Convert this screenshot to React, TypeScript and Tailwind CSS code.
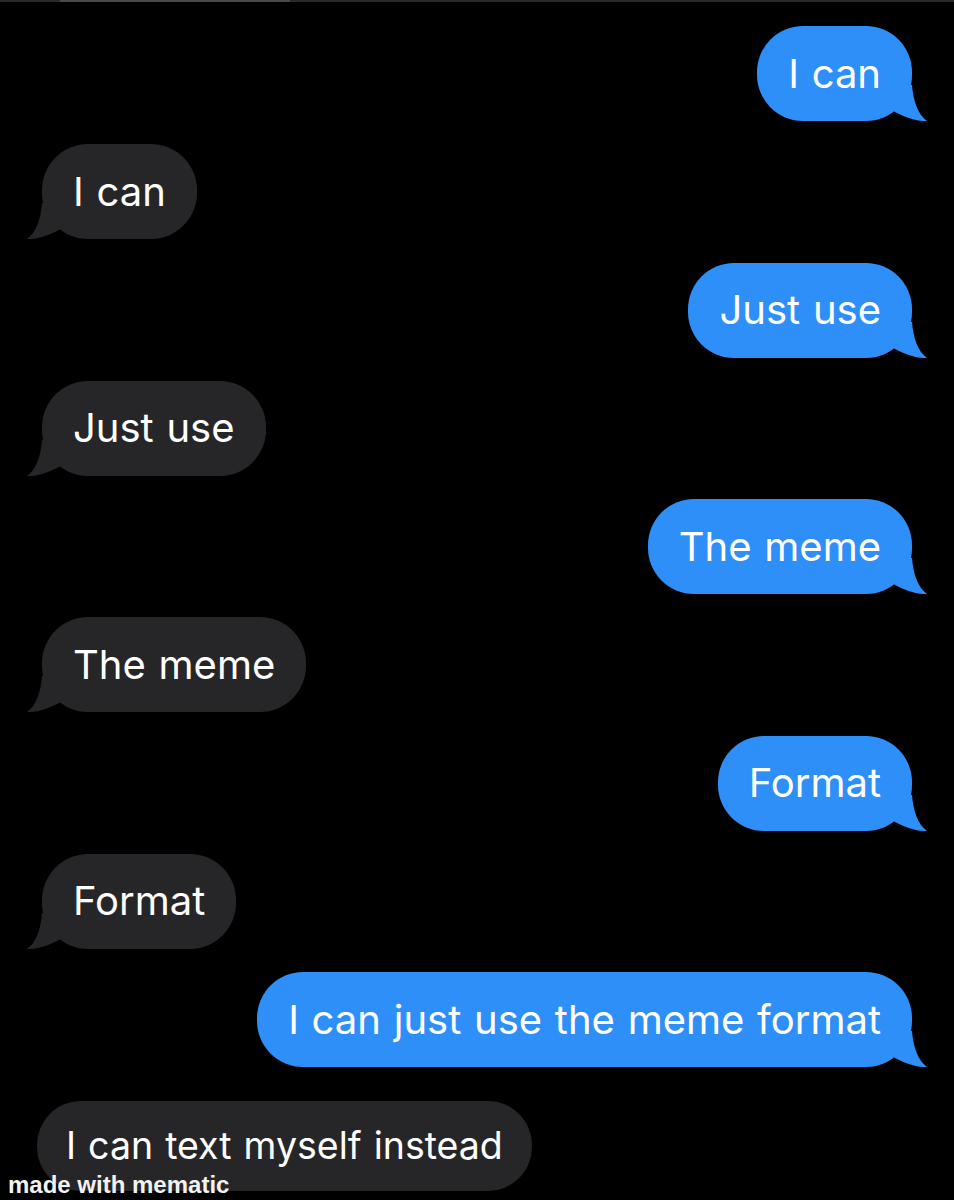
const messages: { text: string; mine: boolean }[] = [
  { text: "I can", mine: true },
  { text: "I can", mine: false },
  { text: "Just use", mine: true },
  { text: "Just use", mine: false },
  { text: "The meme", mine: true },
  { text: "The meme", mine: false },
  { text: "Format", mine: true },
  { text: "Format", mine: false },
  { text: "I can just use the meme format", mine: true },
];

function Tail({ color, flip }: { color: string; flip?: boolean }) {
  return (
    <svg
      width="48"
      height="36"
      viewBox="0 0 48 36"
      className={flip ? "absolute bottom-0 left-[-16px] -scale-x-100" : "absolute bottom-0 right-[-16px]"}
    >
      <path d="M8 0 L32 0 C33 15 38 30 47 36 C38 36.5 26 33 15 27 L8 20 Z" fill={color} />
    </svg>
  );
}

function Bubble({ text, mine }: { text: string; mine: boolean }) {
  const color = mine ? "#2f8ff8" : "#262629";
  return (
    <div className={mine ? "flex justify-end" : "flex justify-start"}>
      <div
        className={
          mine
            ? "relative flex h-[95px] items-center rounded-[46px] bg-[#2f8ff8] px-[31px] text-[40px] text-white"
            : "relative flex h-[95px] items-center rounded-[46px] bg-[#262629] px-[31px] text-[40px] text-white"
        }
      >
        <span className="relative z-10 whitespace-nowrap [word-spacing:1.5px]">{text}</span>
        <Tail color={color} flip={!mine} />
      </div>
    </div>
  );
}

export default function App() {
  return (
    <div
      className="relative h-[1200px] w-[954px] overflow-hidden bg-black"
      style={{ fontFamily: "Inter, 'Noto Sans', sans-serif" }}
    >
      <div className="flex h-[2px] w-full bg-[#2a2a2c]">
        <div className="ml-[60px] h-full w-[230px] bg-[#4a4a4c]" />
      </div>
      <div className="flex flex-col gap-[23.25px] px-[42px] pt-[24px]">
        {messages.map((m, i) => (
          <Bubble key={i} text={m.text} mine={m.mine} />
        ))}
        <div className="mt-[11px] flex justify-start">
          <div className="relative -ml-[5px] flex h-[90px] items-center rounded-[44px] bg-[#262629] px-[29px] text-[37.5px] text-white">
            <span className="relative z-10 whitespace-nowrap [word-spacing:1.5px]">I can text myself instead</span>
          </div>
        </div>
      </div>
      <div
        className="absolute bottom-[3px] left-[8px] text-[24px] font-bold leading-none text-[#f2f2f2]"
        style={{ fontFamily: "'Liberation Sans', Arial, sans-serif" }}
      >
        made with mematic
      </div>
    </div>
  );
}
